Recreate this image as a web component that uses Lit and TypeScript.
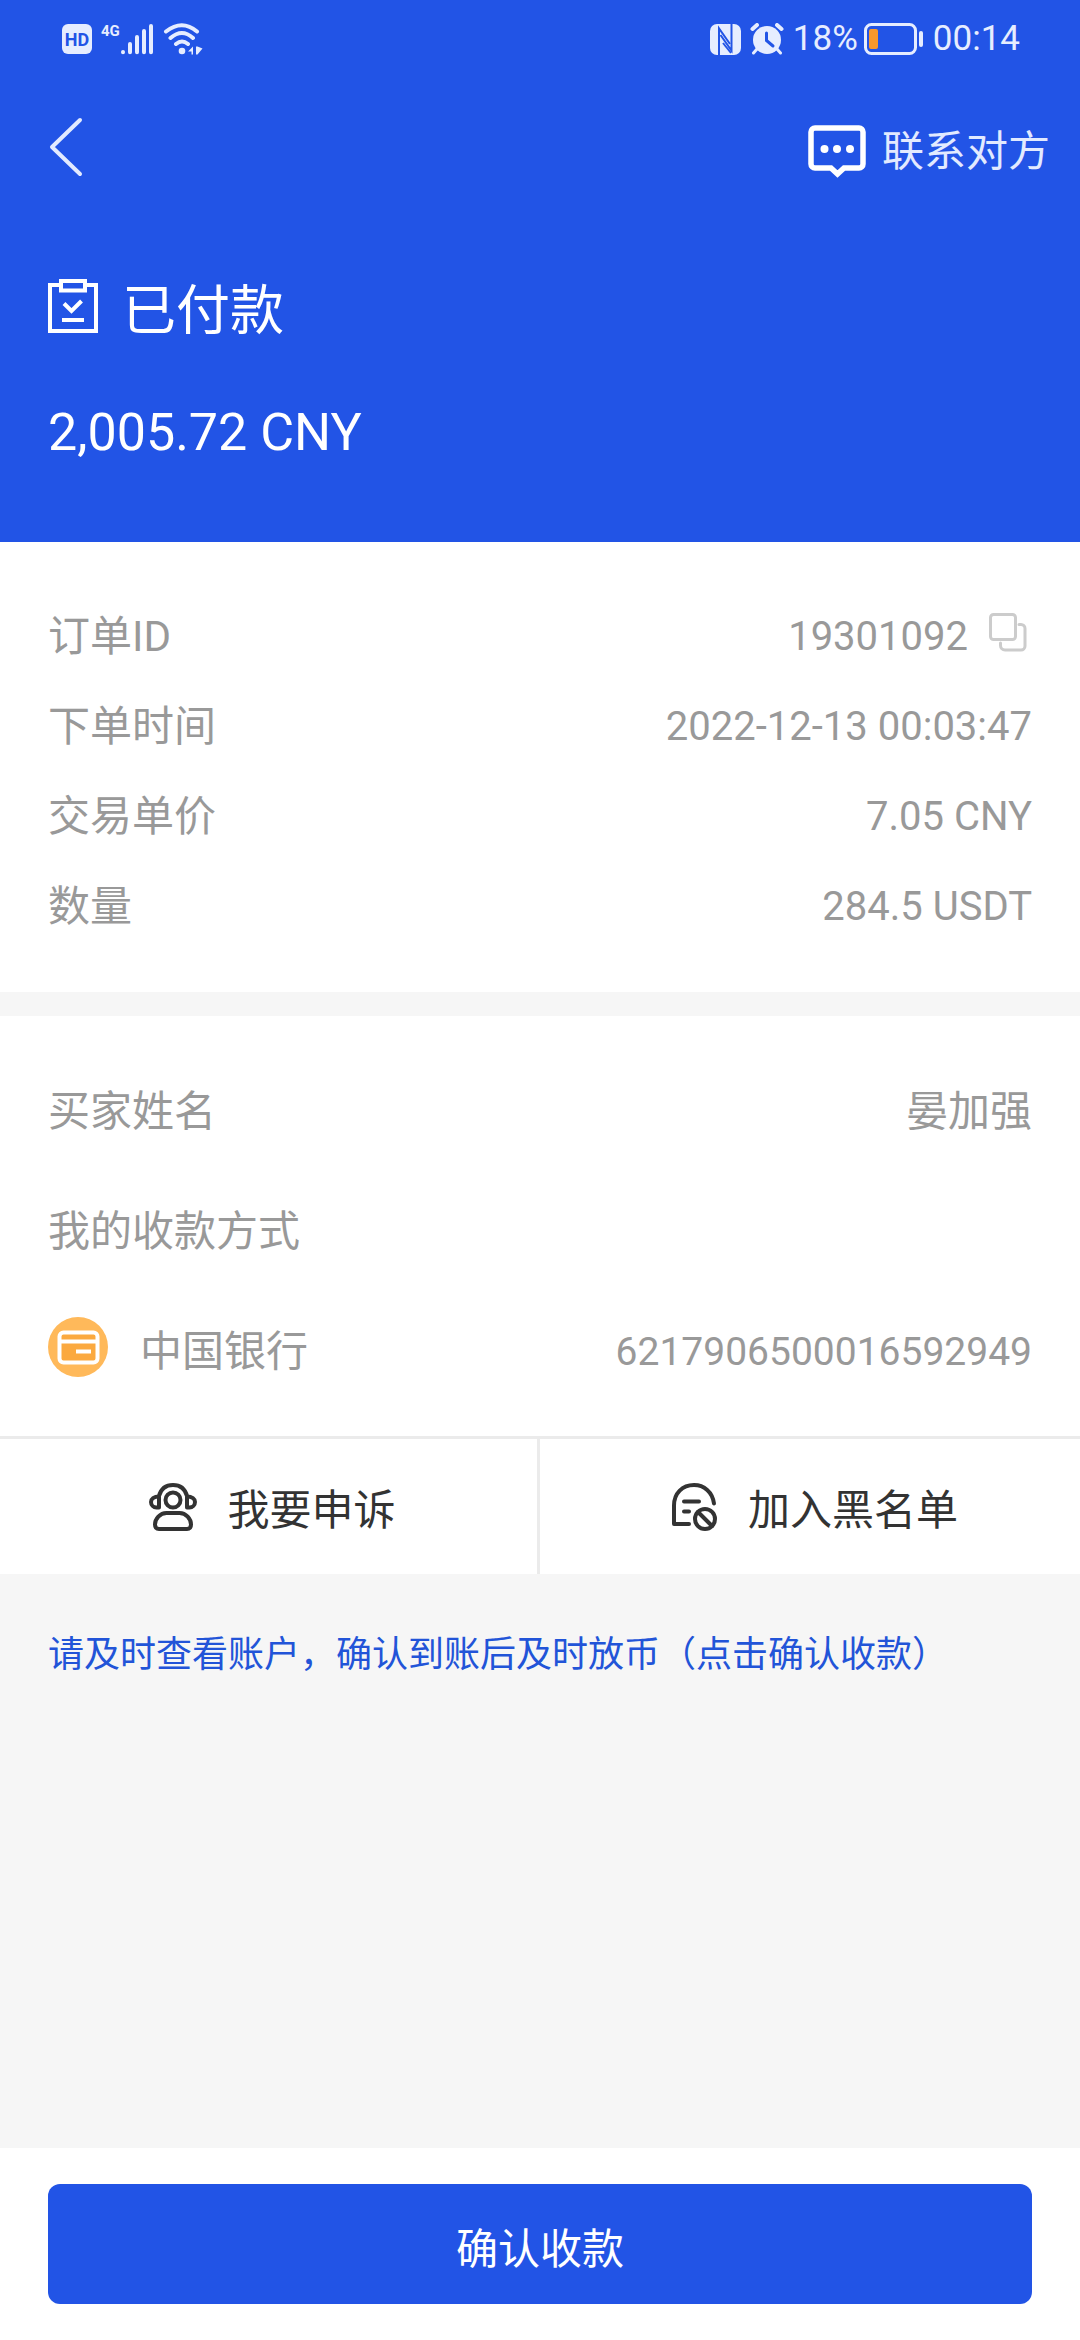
import { LitElement, html, css, svg } from "lit";
import { customElement, property } from "lit/decorators.js";

const icons = {
  signal: svg`<svg width="34" height="32" viewBox="0 0 34 32" fill="none" stroke="currentColor" stroke-width="4" stroke-linecap="round" aria-hidden="true">
    <path d="M3 29v0.2M10 21v8.2M17 14v15.2M24 8v21.2M31 3v26.2"/></svg>`,
  wifi: svg`<svg width="40" height="32" viewBox="0 0 40 32" fill="none" stroke="currentColor" stroke-width="4" stroke-linecap="round" aria-hidden="true">
    <path d="M3 8.500Q19 -4 34 8.500M7.500 15Q19 5 30 15M13 21Q19 16 25 21"/>
    <circle cx="19" cy="28" r="3.300" fill="currentColor" stroke="none"/>
    <path d="M25 28.500l5-5v8h-1.500v-3zM33 31.500v-8h1.500l5 2-5 6z" fill="currentColor" stroke="none"/></svg>`,
  nfc: svg`<svg width="31" height="31" viewBox="0 0 31 31" fill="none" aria-hidden="true">
    <rect width="31" height="31" rx="7" fill="currentColor"/>
    <path d="M9 31V4.500L20 20" stroke="#2254e6" stroke-width="2"/>
    <path d="M21.500 0v26.500L10.500 11" stroke="#2254e6" stroke-width="2"/>
    <path d="M13 19l8 10" stroke="#2254e6" stroke-width="2"/></svg>`,
  alarm: svg`<svg width="34" height="32" viewBox="0 0 34 32" fill="none" stroke="currentColor" stroke-linecap="round" aria-hidden="true">
    <circle cx="17" cy="17" r="14" fill="currentColor" stroke="none"/>
    <path d="M2.500 6L7 2M27 2l4.500 4" stroke-width="4"/>
    <path d="M7 26l-3.500 4M27 26l3.500 4" stroke-width="3"/>
    <path d="M16.500 10v7.500l6.500 5.500" stroke="#2254e6" stroke-width="3"/></svg>`,
  battery: svg`<svg width="60" height="34" viewBox="0 0 60 34" fill="none" aria-hidden="true">
    <rect x="1.500" y="2.500" width="50" height="29" rx="6" stroke="currentColor" stroke-width="3"/>
    <rect x="5" y="7" width="9" height="20" rx="2" fill="#f9982b"/>
    <rect x="55" y="9" width="4" height="16" rx="2" fill="currentColor"/></svg>`,
  back: svg`<svg width="36" height="60" viewBox="0 0 36 60" fill="none" stroke="currentColor" stroke-width="4" stroke-linecap="round" stroke-linejoin="round" aria-hidden="true">
    <path d="M32 3L4 30l28 27"/></svg>`,
  chat: svg`<svg width="58" height="54" viewBox="0 0 58 54" fill="none" aria-hidden="true">
    <path d="M7 3h44a4 4 0 0 1 4 4v32a4 4 0 0 1-4 4H36l-6.500 6L23 43H7a4 4 0 0 1-4-4V7a4 4 0 0 1 4-4z" stroke="#fff" stroke-width="5.500"/>
    <circle cx="16.500" cy="24" r="4" fill="#fff"/><circle cx="29" cy="24" r="4" fill="#fff"/><circle cx="42" cy="24" r="4" fill="#fff"/></svg>`,
  clipboard: svg`<svg width="50" height="54" viewBox="0 0 50 54" fill="none" stroke="currentColor" stroke-width="4" aria-hidden="true">
    <path d="M12 6H2v46h46V6H38"/><path d="M13 2h24v9.500H13z"/>
    <path d="M16 24.500l7.500 7.500L33.500 22M14 41h22"/></svg>`,
  copy: svg`<svg width="44" height="40" viewBox="0 0 44 40" fill="none" stroke="#ccc" stroke-width="3" aria-hidden="true">
    <rect x="2.500" y="2.500" width="25" height="25" rx="3"/>
    <path d="M31 12.500h2a4 4 0 0 1 4 4V34a4 4 0 0 1-4 4H17a4.500 4.500 0 0 1-4.500-4.500V31" stroke-linecap="round"/></svg>`,
  card: svg`<svg width="60" height="60" viewBox="0 0 60 60" fill="none" aria-hidden="true">
    <circle cx="30" cy="30" r="30" fill="#ffb95a"/>
    <rect x="11.500" y="15.500" width="38" height="30" rx="4" fill="#fba93f" stroke="#fff" stroke-width="4"/>
    <path d="M12 24.500h37" stroke="#fff" stroke-width="4"/><path d="M28 34.500h15" stroke="#fff" stroke-width="4"/></svg>`,
  appeal: svg`<svg width="48" height="48" viewBox="0 0 48 48" fill="none" stroke="currentColor" stroke-width="4" stroke-linejoin="round" aria-hidden="true">
    <circle cx="24" cy="17" r="7.500"/>
    <path d="M10 13C12 5.500 17 2 24 2s12 3.500 14 11"/>
    <path d="M10 13.500c-5 0-8 2.500-8 5.500s2.500 5.500 5.500 5.500H10zM38 13.500c5 0 8 2.500 8 5.500s-2.500 5.500-5.500 5.500H38z"/>
    <path d="M17.500 30h13C37 30 42 36 42 41.500c0 3-1.500 4.500-4 4.500H10c-2.500 0-4-1.500-4-4.500C6 36 11 30 17.500 30z"/></svg>`,
  block: svg`<svg width="48" height="48" viewBox="0 0 48 48" fill="none" stroke="currentColor" stroke-width="4" stroke-linecap="round" stroke-linejoin="round" aria-hidden="true">
    <path d="M19 41H4V22.500C4 10 12.500 2 24 2c10 0 18.500 7 20 18.500"/>
    <path d="M14 18.500h15M14 28.500h5"/>
    <circle cx="35" cy="36" r="10"/><path d="M28 29l14 14"/></svg>`,
};

const base = css`
  :host {
    display: block;
    font-family: Roboto, "Noto Sans CJK SC", sans-serif;
  }
  * { box-sizing: border-box; }
  svg { display: block; flex: none; }
  button {
    margin: 0;
    padding: 0;
    border: 0;
    background: none;
    color: inherit;
    font: inherit;
    cursor: pointer;
  }
`;

@customElement("status-bar")
export class StatusBar extends LitElement {
  static styles = [base, css`
    .bar {
      display: flex;
      justify-content: space-between;
      height: 76px;
      padding: 2px 60px 0 62px;
      color: #e6edff;
    }
    .group { display: flex; align-items: center; gap: 9px; }
    .cell { display: flex; align-items: flex-start; }
    .hd {
      width: 30px;
      height: 30px;
      border-radius: 6px;
      background: #e6edff;
      color: #2254e6;
      font-size: 18px;
      font-weight: 700;
      line-height: 31px;
      text-align: center;
    }
    .net { font-size: 15px; font-weight: 700; line-height: 16px; }
    .text { font-size: 35px; line-height: 40px; }
    .power { display: flex; align-items: center; gap: 6px; }
  `];
  render() {
    return html`<div class="bar">
      <div class="group">
        <span class="hd">HD</span>
        <span class="cell"><span class="net">4G</span>${icons.signal}</span>
        ${icons.wifi}
      </div>
      <div class="group">
        ${icons.nfc}${icons.alarm}
        <span class="power"><span class="text">18%</span>${icons.battery}</span>
        <span class="text">00:14</span>
      </div>
    </div>`;
  }
}

@customElement("info-row")
export class InfoRow extends LitElement {
  @property() label = "";
  @property() value = "";
  static styles = [base, css`
    .row {
      display: flex;
      align-items: center;
      justify-content: space-between;
      min-height: var(--row-height, 90px);
      color: #999;
      line-height: 60px;
    }
    .side { display: flex; align-items: center; }
    .lead { gap: 32px; font-size: 42px; }
    .trail { gap: 20px; font-size: var(--value-size, 40px); }
  `];
  render() {
    return html`<div class="row">
      <span class="side lead"><slot name="icon"></slot>${this.label}</span>
      <span class="side trail">${this.value}<slot name="action"></slot></span>
    </div>`;
  }
}

@customElement("app-root")
export class AppRoot extends LitElement {
  static styles = [base, css`
    :host {
      display: flex;
      flex-direction: column;
      min-height: 100vh;
      background: #f6f6f6;
    }
    .head { padding-bottom: 66px; background: #2254e6; color: #fff; }
    .nav {
      display: flex;
      align-items: center;
      justify-content: space-between;
      height: 146px;
      padding: 0 30px 0 48px;
    }
    .contact {
      display: flex;
      align-items: center;
      gap: 16px;
      padding-top: 6px;
      color: #e2eaff;
      font-size: 42px;
      line-height: 60px;
    }
    .back { padding-bottom: 4px; color: #e2eaff; }
    .state {
      display: flex;
      align-items: center;
      gap: 24px;
      height: 168px;
      margin: 0;
      padding: 0 48px;
      font-size: 54px;
      font-weight: 400;
    }
    .amount {
      margin: 0;
      padding: 0 48px;
      font-size: 52px;
      line-height: 86px;
    }
    .order { padding: 50px 48px 40px; background: #fff; }
    .copy { padding-bottom: 10px; }
    .payee {
      --row-height: 120px;
      margin-top: 24px;
      padding: 36px 48px 24px;
      background: #fff;
    }
    .bank { padding-bottom: 10px; }
    .name { --value-size: 42px; }
    .account { --value-size: 39px; }
    .actions {
      display: grid;
      grid-template-columns: 1fr 1fr;
      border-top: 3px solid #ebebeb;
      background: #fff;
      color: #333;
    }
    .action {
      display: flex;
      align-items: center;
      justify-content: center;
      gap: 30px;
      height: 135px;
      padding-left: 8px;
      font-size: 42px;
    }
    .action:first-child { border-right: 3px solid #ebebeb; }
    .tip {
      flex: 1;
      margin: 0;
      padding: 51px 48px;
      color: #2254d8;
      font-size: 36px;
      line-height: 60px;
    }
    .foot { padding: 36px 48px; background: #fff; }
    .confirm {
      width: 100%;
      height: 120px;
      padding-top: 2px;
      border-radius: 12px;
      background: #2254e6;
      color: #fff;
      font-size: 42px;
    }
  `];
  render() {
    return html`
      <header class="head">
        <status-bar></status-bar>
        <nav class="nav">
          <button class="back" aria-label="返回">${icons.back}</button>
          <button class="contact">${icons.chat}联系对方</button>
        </nav>
        <h1 class="state">${icons.clipboard}已付款</h1>
        <p class="amount">2,005.72 CNY</p>
      </header>
      <section class="order">
        <info-row label="订单ID" value="19301092">
          <button class="copy" slot="action" aria-label="复制">${icons.copy}</button>
        </info-row>
        <info-row label="下单时间" value="2022-12-13 00:03:47"></info-row>
        <info-row label="交易单价" value="7.05 CNY"></info-row>
        <info-row label="数量" value="284.5 USDT"></info-row>
      </section>
      <section class="payee">
        <info-row class="name" label="买家姓名" value="晏加强"></info-row>
        <info-row label="我的收款方式"></info-row>
        <info-row class="account" label="中国银行" value="6217906500016592949">
          <span class="bank" slot="icon">${icons.card}</span>
        </info-row>
      </section>
      <div class="actions">
        <button class="action">${icons.appeal}我要申诉</button>
        <button class="action">${icons.block}加入黑名单</button>
      </div>
      <p class="tip">请及时查看账户，确认到账后及时放币（点击确认收款）</p>
      <footer class="foot"><button class="confirm">确认收款</button></footer>
    `;
  }
}
